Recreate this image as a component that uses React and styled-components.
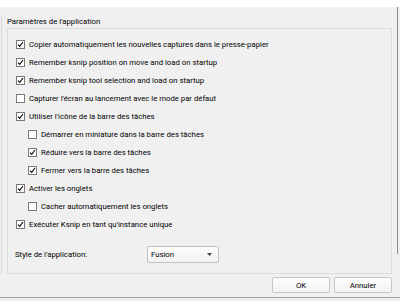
import React from "react"
import styled, { createGlobalStyle } from "styled-components"

const GlobalStyle = createGlobalStyle`
  html, body {
    margin: 0;
    padding: 0;
    background: #f0f0f0;
  }
  body {
    font-family: Roboto, "Noto Sans", sans-serif;
    font-size: 7.75px;
    color: #000;
  }
`

const Window = styled.div`
  width: 400px;
  height: 301px;
  background: #f0f0f0;
  display: flex;
  flex-direction: column;
  overflow: hidden;
`

const TopBand = styled.div`
  height: 7px;
  background: #ffffff;
  flex-shrink: 0;
`

const Middle = styled.div`
  display: flex;
  height: 266px;
`

const Page = styled.div`
  margin-top: 8px;
  margin-left: 1px;
  height: 259px;
  border-left: 1px solid #d6d6d6;
  padding-left: 5px;
  display: flex;
  flex-direction: column;
  box-sizing: border-box;
`

const EdgeLine = styled.div`
  margin-left: 5px;
  width: 1px;
  height: 247px;
  background: #8c8c8c;
`

const GroupTitle = styled.div`
  height: 13px;
  line-height: 13px;
`

const GroupFrame = styled.div`
  box-sizing: border-box;
  width: 385px;
  height: 246px;
  border: 1px solid #dcdcdc;
  padding: 6px 0 0 8px;
  display: flex;
  flex-direction: column;
`

const OptionRow = styled.label`
  display: flex;
  align-items: center;
  height: 18px;
  gap: 4px;
  padding-left: ${({ level }) => (level ? 12 * level : 0)}px;
  white-space: nowrap;
`

const Box = styled.span`
  box-sizing: border-box;
  width: 9px;
  height: 9px;
  border: 1px solid #7a7a7a;
  background: #fff;
  display: flex;
  align-items: center;
  justify-content: center;
  flex-shrink: 0;
`

const StyleRow = styled.div`
  display: flex;
  align-items: center;
  margin-top: 13px;
  height: 17px;
`

const StyleLabel = styled.div`
  width: 132px;
  margin-left: -1px;
`

const Combo = styled.div`
  box-sizing: border-box;
  width: 72px;
  height: 17px;
  border: 1px solid #c2c2c2;
  border-radius: 2px;
  background: linear-gradient(#fcfcfc, #f2f2f2);
  display: flex;
  align-items: center;
  justify-content: space-between;
  padding: 0 6px 0 3px;
`

const Footer = styled.div`
  display: flex;
  justify-content: flex-end;
  gap: 4px;
  padding: 4px 8px 0 0;
  height: 25px;
  box-sizing: border-box;
  border-bottom: 1px solid #a0a0a0;
`

const Button = styled.button`
  box-sizing: border-box;
  width: 58px;
  height: 16px;
  padding: 0;
  font: inherit;
  color: #000;
  border: 1px solid #c6c6c6;
  border-radius: 2px;
  background: linear-gradient(#fdfdfd, #f3f3f3);
`

function Check({ checked }) {
  return (
    <Box>
      {checked && (
        <svg width="7" height="7" viewBox="0 0 7 7">
          <path d="M1 3.6 L2.7 5.4 L6 1" fill="none" stroke="#111" strokeWidth="1.2" />
        </svg>
      )}
    </Box>
  )
}

const options = [
  { text: "Copier automatiquement les nouvelles captures dans le presse-papier", checked: true },
  { text: "Remember ksnip position on move and load on startup", checked: true },
  { text: "Remember ksnip tool selection and load on startup", checked: true },
  { text: "Capturer l'écran au lancement avec le mode par défaut", checked: false },
  { text: "Utiliser l'icône de la barre des tâches", checked: true },
  { text: "Démarrer en miniature dans la barre des tâches", checked: false, level: 1 },
  { text: "Réduire vers la barre des tâches", checked: true, level: 1 },
  { text: "Fermer vers la barre des tâches", checked: true, level: 1 },
  { text: "Activer les onglets", checked: true },
  { text: "Cacher automatiquement les onglets", checked: false, level: 1 },
  { text: "Exécuter Ksnip en tant qu'instance unique", checked: true },
]

export default function App() {
  return (
    <Window>
      <GlobalStyle />
      <TopBand />
      <Middle>
        <Page>
          <GroupTitle>Paramètres de l'application</GroupTitle>
          <GroupFrame>
            {options.map((o) => (
              <OptionRow key={o.text} level={o.level}>
                <Check checked={o.checked} />
                <span>{o.text}</span>
              </OptionRow>
            ))}
            <StyleRow>
              <StyleLabel>Style de l'application:</StyleLabel>
              <Combo>
                <span>Fusion</span>
                <svg width="5" height="3" viewBox="0 0 5 3">
                  <path d="M0 0 H5 L2.5 3 Z" fill="#444" />
                </svg>
              </Combo>
            </StyleRow>
          </GroupFrame>
        </Page>
        <EdgeLine />
      </Middle>
      <Footer>
        <Button>OK</Button>
        <Button>Annuler</Button>
      </Footer>
    </Window>
  )
}
